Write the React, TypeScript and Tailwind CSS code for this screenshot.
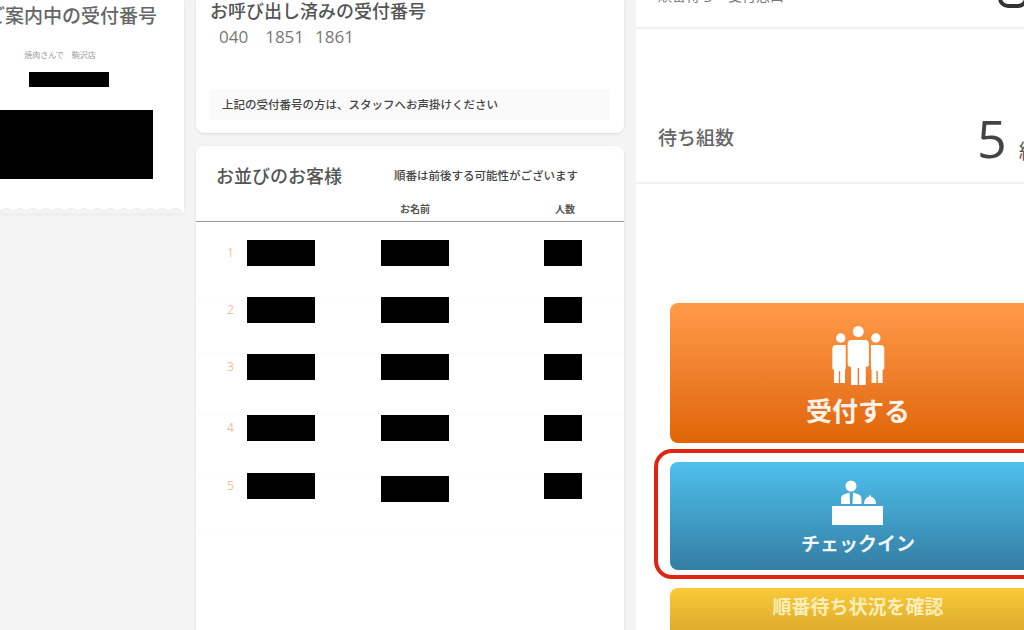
const jp = "font-['Noto_Sans_CJK_JP',sans-serif]";

function People() {
  return (
    <svg width="53" height="59" viewBox="0 0 53 59" fill="#fff">
      <circle cx="26.300" cy="5.500" r="5.500" />
      <circle cx="8.700" cy="12" r="4.700" />
      <circle cx="43.800" cy="12" r="4.700" />
      <path d="M15.700 18q0-4 4-4h13.200q4 0 4 4v20q0 3-3.200 3V59h-6.600V42h-1.500v17h-6.600V41q-3.300 0-3.300-3z" />
      <path d="M.3 23q0-4 4-4h9.400V42q0 1.500-.7 2v13H8.200V45H6.800V57H2V44q-1.700-.5-1.700-2z" />
      <path d="M52.300 23q0-4-4-4h-9.400V42q0 1.500.7 2v13h4.800V45h1.400V57h4.800V44q1.700-.5 1.700-2z" />
    </svg>
  );
}

function Desk() {
  return (
    <svg width="52" height="45" viewBox="0 0 52 45" fill="#fff">
      <circle cx="19" cy="6" r="5.500" />
      <path d="M9 24v-5q0-4 4-5l4.500-1.500L18 24zM29.500 24v-5q0-4-4-5L21 12.500 20.500 24z" />
      <path d="M32 24q0-6 5.200-7.500v-1.300h1.600v1.300Q44 18 44 24z" />
      <rect x="0" y="26" width="51" height="19" />
    </svg>
  );
}

function Row({ n, h, mid }: { n: number; h: string; mid?: string }) {
  return (
    <div className={`flex ${h} border-b border-[#fcfcfc]`}>
      <span className="w-[51px] pl-[31px] mt-[1px] text-[12px] leading-[24px] text-[#e3c4a0] font-['Open_Sans',sans-serif] shrink-0 whitespace-nowrap">
        {n}
      </span>
      <div className="w-[68px] h-[26px] bg-black shrink-0" />
      <div className={`w-[68px] h-[26px] bg-black ml-[66px] shrink-0 ${mid ?? ""}`} />
      <div className="w-[38px] h-[26px] bg-black ml-[95px] shrink-0" />
    </div>
  );
}

export default function App() {
  return (
    <div className={`${jp} h-[630px] w-[1024px] overflow-hidden bg-[#f4f4f4] flex items-start`}>
      {/* ticket */}
      <div className="w-[184px] h-[213px] shrink-0 bg-white relative shadow-[0_1px_3px_rgba(0,0,0,0.08)] overflow-visible">
        <p className="text-[19px] leading-[26px] text-[#666] font-medium whitespace-nowrap ml-[-14px] mt-[2px]">ご案内中の受付番号</p>
        <p className="text-[8px] leading-[12px] text-[#999] text-center w-[120px] mt-[21px]">焼肉さんで　駒沢店</p>
        <div className="w-[80px] h-[15px] bg-black ml-[29px] mt-[11px]" />
        <div className="w-[153px] h-[69px] bg-black mt-[23px]" />
        <svg className="absolute left-0 bottom-[-1px]" width="184" height="6" viewBox="0 0 184 6">
          <path
            d="M0 6V3l6.500-3 6.500 3 6.500-3 6.500 3 6.500-3 6.500 3 6.500-3 6.500 3 6.500-3 6.500 3 6.500-3 6.500 3 6.500-3 6.500 3 6.500-3 6.500 3 6.500-3 6.500 3 6.500-3 6.500 3 6.500-3 6.500 3 6.500-3 6.500 3 6.500-3 6.500 3 6.500-3 6.500 3V6z"
            fill="#f4f4f4"
            stroke="#ececec"
            strokeWidth="1"
          />
        </svg>
      </div>

      {/* middle */}
      <div className="w-[428px] ml-[12px] shrink-0 flex flex-col gap-[13px]">
        <div className="h-[133px] bg-white rounded-b-[8px] shadow-[0_1px_3px_rgba(0,0,0,0.1)] px-[14px] flex flex-col">
          <p className="text-[18px] leading-[24px] text-[#555] font-medium whitespace-nowrap mt-[-2px]">お呼び出し済みの受付番号</p>
          <p className="flex text-[17px] leading-[24px] text-[#777] font-['Open_Sans',sans-serif] pl-[9px] mt-[3px] whitespace-nowrap">
            <span>040</span>
            <span className="ml-[17px]">1851</span>
            <span className="ml-[11px]">1861</span>
          </p>
          <div className="mt-[41px] h-[30px] bg-[#fafafa] px-[12px] flex items-center text-[11.500px] text-[#444] font-medium whitespace-nowrap">
            上記の受付番号の方は、スタッフへお声掛けください
          </div>
        </div>
        <div className="h-[490px] bg-white rounded-t-[8px] shadow-[0_1px_3px_rgba(0,0,0,0.1)]">
          <div className="flex items-center pt-[16px] pl-[20px]">
            <p className="text-[18px] leading-[26px] text-[#555] font-medium whitespace-nowrap">お並びのお客様</p>
            <p className="text-[11.500px] leading-[26px] text-[#444] font-medium whitespace-nowrap ml-[52px]">順番は前後する可能性がございます</p>
          </div>
          <div className="flex h-[21px] mt-[13px] border-b border-[#999] text-[10px] leading-[16px] font-bold text-[#555]">
            <span className="ml-[204px] w-[155px]">お名前</span>
            <span>人数</span>
          </div>
          <div className="pt-[18px]">
            <Row n={1} h="h-[57px]" />
            <Row n={2} h="h-[57px]" />
            <Row n={3} h="h-[61px]" />
            <Row n={4} h="h-[58px]" />
            <Row n={5} h="h-[58px]" mid="mt-[3px]" />
          </div>
        </div>
      </div>

      {/* right */}
      <div className="w-[444px] h-[630px] ml-[12px] shrink-0 bg-white">
        <div className="h-[29px] border-b-2 border-[#f1f1f1] relative overflow-hidden">
          <p className="text-[14px] leading-[16px] text-[#777] pl-[22px] mt-[-13px] whitespace-nowrap">順番待ち　受付窓口</p>
          <div className="absolute left-[362px] top-[-12px] w-[30px] h-[20px] rounded-full border-[4px] border-[#333]" />
        </div>
        <div className="h-[155px] border-b-2 border-[#f1f1f1] flex items-end pb-[13px] pl-[22px]">
          <p className="text-[19px] leading-[28px] text-[#666] font-medium whitespace-nowrap mb-[18px]">待ち組数</p>
          <p className="text-[52px] leading-[62px] text-[#444] font-['Open_Sans',sans-serif] ml-[243px]">5</p>
          <p className="text-[20px] leading-[28px] text-[#555] ml-[12px] mb-[4px] whitespace-nowrap">組</p>
        </div>
        <div className="ml-[34px] w-[376px] flex flex-col mt-[119px]">
          <div className="h-[140px] rounded-[8px] bg-gradient-to-b from-[#ff9b47] to-[#e06400] flex flex-col items-center pt-[23px]">
            <People />
            <p className="text-[26px] leading-[34px] font-bold mt-[8px] text-[#fdf3ea]">受付する</p>
          </div>
          <div className="relative mt-[19px] h-[108px] rounded-[8px] bg-gradient-to-b from-[#4fc1ee] to-[#347ea3] flex flex-col items-center pt-[18px]">
            <div className="absolute -inset-x-[16px] -top-[13px] -bottom-[9px] border-[4px] border-[#e0240f] rounded-[18px]" />
            <Desk />
            <p className="text-[19px] leading-[26px] font-bold text-[#f2f8fb] mt-[5px]">チェックイン</p>
          </div>
          <div className="mt-[18px] h-[50px] rounded-[8px] bg-gradient-to-b from-[#f9ca38] to-[#d8a72c] flex justify-center pt-[5px]">
            <p className="text-[19px] leading-[26px] font-bold text-[#fbeebb]">順番待ち状況を確認</p>
          </div>
        </div>
      </div>
    </div>
  );
}
